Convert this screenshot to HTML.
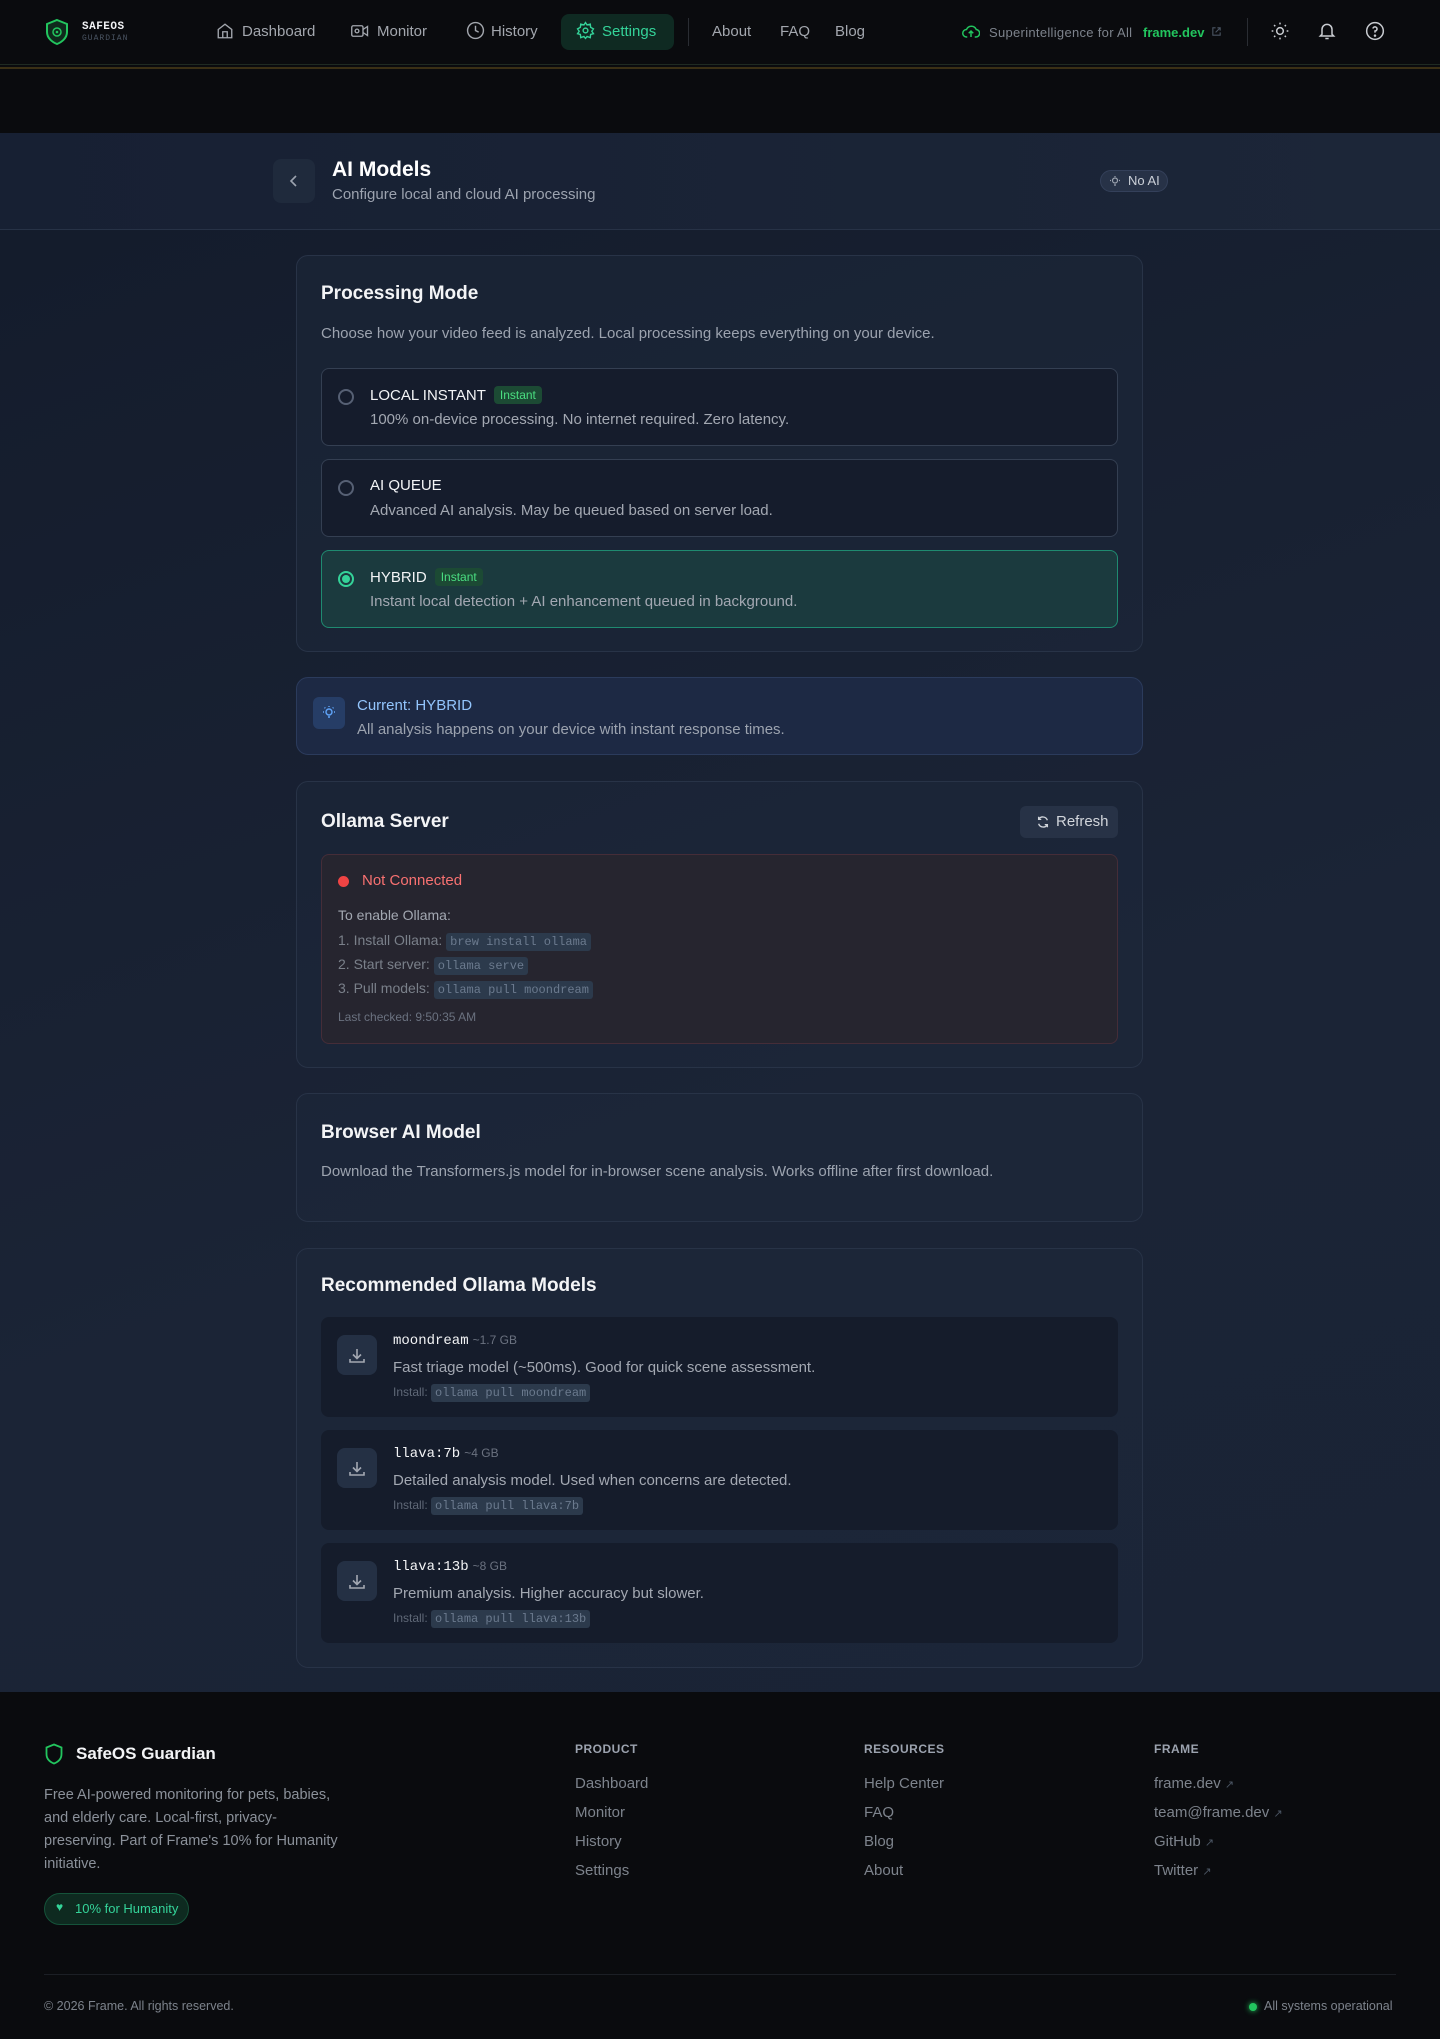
<!DOCTYPE html>
<html><head><meta charset="utf-8"><style>
*{box-sizing:border-box;margin:0;padding:0}
body{width:1440px;height:2039px;background:#0a0b0e;font-family:"Liberation Sans",sans-serif;color:#e5e7eb;position:relative;overflow:hidden}
.a{position:absolute}
.nav{left:0;top:0;width:1440px;height:65px;background:#0a0b0e;border-bottom:1px solid #1f2a22}
.gold{left:0;top:67px;width:1440px;height:2px;background:#3b3015}
.ni{position:absolute;top:22px;font-size:15px;color:#a3a7ae;line-height:20px}
.ic{position:absolute;top:22px}
.hdr{left:0;top:133px;width:1440px;height:97px;background:linear-gradient(90deg,#172033,#1c2638);border-bottom:1px solid #273246}
.main{left:0;top:230px;width:1440px;height:1462px;background:linear-gradient(160deg,#141c2c 0%,#1b2436 60%,#1a2335 100%)}
.card{position:absolute;left:296px;width:847px;background:rgba(30,40,58,.55);border:1px solid #283347;border-radius:12px}
.ct{position:absolute;left:24px;font-size:19px;font-weight:bold;color:#f3f4f6}
.txt{font-size:15px;color:#9ca3af}
.opt{position:absolute;left:24px;width:797px;height:78px;border:1px solid #343f52;border-radius:8px;background:#151c2c}
.radio{position:absolute;left:16px;top:20px;width:16px;height:16px;border:2px solid #566074;border-radius:50%}
.ot{position:absolute;left:48px;top:17px;font-size:15px;color:#f3f4f6;font-weight:500}
.od{position:absolute;left:48px;top:42px;font-size:15px;color:#a3a8b2}
.badge{display:inline-block;background:#1c4a34;color:#4ade80;font-size:12px;padding:2px 6px;border-radius:4px;margin-left:8px;vertical-align:1px;font-weight:normal}
code{font-family:"Liberation Mono",monospace;font-size:12px;background:#2c3a4c;color:#6b7a8e;padding:2px 4px;border-radius:3px}
.mi{position:absolute;left:24px;width:797px;height:100px;background:#151c2b;border-radius:8px}
.mic{position:absolute;left:16px;top:18px;width:40px;height:40px;background:#243044;border-radius:8px}
.mn{position:absolute;left:72px;top:16px;font-family:"Liberation Mono",monospace;font-size:14px;color:#f3f4f6}
.mn span{font-family:"Liberation Sans",sans-serif;font-size:12px;color:#6b7280;margin-left:4px}
.md{position:absolute;left:72px;top:42px;font-size:15px;color:#a3a8b2}
.mx{position:absolute;left:72px;top:68px;font-size:12px;color:#5f6877}
.fh{position:absolute;top:1742px;font-size:12px;color:#9ca3af;letter-spacing:.5px;font-weight:bold}
.fl{position:absolute;font-size:15px;color:#7d838c}
</style></head><body>
<div class="a nav"></div>
<div class="a gold"></div>
<svg class="a" style="left:45px;top:18px" width="24" height="28" viewBox="0 0 24 28"><path d="M12 2 L22 6 V14 C22 20 17 24 12 26 C7 24 2 20 2 14 V6 Z" fill="#0f2a1c" stroke="#22c55e" stroke-width="2"/><circle cx="12" cy="14" r="4" fill="none" stroke="#22c55e" stroke-width="1.5"/><circle cx="12" cy="14" r="1.3" fill="#22c55e"/></svg>
<div class="a" style="left:82px;top:21px;font-size:11px;font-weight:bold;color:#f3f4f6;letter-spacing:.5px;font-family:'Liberation Mono',monospace">SAFEOS</div>
<div class="a" style="left:82px;top:34px;font-size:8px;color:#4b5563;letter-spacing:1px;font-family:'Liberation Mono',monospace">GUARDIAN</div>
<svg class="ic" style="left:216px;top:22px" width="18" height="18" viewBox="0 0 24 24" fill="none" stroke="#a3a7ae" stroke-width="1.8"><path d="M3 10 L12 3 L21 10 V21 H3 Z M9 21 V13 H15 V21"/></svg>
<div class="ni" style="left:242px">Dashboard</div>
<svg class="ic" style="left:350px;top:22px" width="20" height="18" viewBox="0 0 26 24" fill="none" stroke="#a3a7ae" stroke-width="1.8"><rect x="2" y="5" width="15" height="14" rx="2"/><path d="M17 10 L23 6 V18 L17 14"/><circle cx="9" cy="12" r="2.5"/></svg>
<div class="ni" style="left:377px">Monitor</div>
<svg class="ic" style="left:466px;top:21px" width="19" height="19" viewBox="0 0 24 24" fill="none" stroke="#a3a7ae" stroke-width="1.8"><circle cx="12" cy="12" r="10"/><path d="M12 6 V12 L16 14"/></svg>
<div class="ni" style="left:491px">History</div>
<div class="a" style="left:561px;top:14px;width:113px;height:36px;background:#0f2a22;border-radius:8px"></div>
<svg class="ic" style="left:576px;top:21px" width="19" height="19" viewBox="0 0 24 24" fill="none" stroke="#34d399" stroke-width="1.8"><circle cx="12" cy="12" r="3"/><path d="M12 2 L14 5 L18 4 L18.5 8 L22 10 L20 13 L22 16 L18.5 17 L18 21 L14 19.5 L12 22 L10 19.5 L6 21 L5.5 17 L2 16 L4 13 L2 10 L5.5 8 L6 4 L10 5 Z"/></svg>
<div class="ni" style="left:602px;color:#34d399">Settings</div>
<div class="a" style="left:688px;top:18px;width:1px;height:28px;background:#2a2d33"></div>
<div class="ni" style="left:712px">About</div>
<div class="ni" style="left:780px">FAQ</div>
<div class="ni" style="left:835px">Blog</div>
<svg class="ic" style="left:962px;top:23px" width="18" height="16" viewBox="0 0 24 20" fill="none" stroke="#22c55e" stroke-width="2"><path d="M7 18 H6 A5 5 0 0 1 6 8 A7 7 0 0 1 19 8 A5 5 0 0 1 18 18 H17"/><path d="M12 18 V10 M9 13 L12 10 L15 13"/></svg>
<div class="ni" style="left:989px;font-size:13px;top:23px;color:#7d838c;letter-spacing:.3px">Superintelligence for All</div>
<div class="ni" style="left:1143px;font-size:13px;top:23px;color:#22c55e;font-weight:bold">frame.dev</div>
<svg class="ic" style="left:1211px;top:26px" width="11" height="11" viewBox="0 0 12 12" fill="none" stroke="#4b5563" stroke-width="1.2"><path d="M5 2 H2 V10 H10 V7 M7 2 H10 V5 M10 2 L5 7"/></svg>
<div class="a" style="left:1247px;top:18px;width:1px;height:28px;background:#2a2d33"></div>
<svg class="ic" style="left:1270px;top:21px" width="20" height="20" viewBox="0 0 24 24" fill="none" stroke="#c9ccd1" stroke-width="1.8"><circle cx="12" cy="12" r="4"/><path d="M12 2v2M12 20v2M2 12h2M20 12h2M4.9 4.9l1.4 1.4M17.7 17.7l1.4 1.4M4.9 19.1l1.4-1.4M17.7 6.3l1.4-1.4"/></svg>
<svg class="ic" style="left:1317px;top:21px" width="20" height="20" viewBox="0 0 24 24" fill="none" stroke="#c9ccd1" stroke-width="1.8"><path d="M6 16 V10 A6 6 0 0 1 18 10 V16 L20 18 H4 Z M10 21 H14"/></svg>
<svg class="ic" style="left:1365px;top:21px" width="20" height="20" viewBox="0 0 24 24" fill="none" stroke="#c9ccd1" stroke-width="1.8"><circle cx="12" cy="12" r="10"/><path d="M9.5 9 A2.5 2.5 0 1 1 12 12 V14"/><circle cx="12" cy="17.5" r=".6" fill="#c9ccd1"/></svg>

<div class="a hdr"></div>
<div class="a" style="left:273px;top:159px;width:42px;height:44px;background:#1f2a3c;border-radius:8px"></div>
<svg class="a" style="left:287px;top:174px" width="14" height="14" viewBox="0 0 14 14" fill="none" stroke="#9ca3af" stroke-width="1.6"><path d="M9 2 L4 7 L9 12"/></svg>
<div class="a" style="left:332px;top:158px;font-size:21px;font-weight:bold;color:#fff">AI Models</div>
<div class="a txt" style="left:332px;top:186px">Configure local and cloud AI processing</div>
<div class="a" style="left:1100px;top:170px;width:68px;height:22px;border-radius:11px;background:#273247;border:1px solid #34405a;font-size:13px;color:#cbd0d8;line-height:20px;padding-left:27px">No AI</div>
<svg class="a" style="left:1110px;top:176px" width="10" height="11" viewBox="0 0 10 11" fill="none" stroke="#9ca3af" stroke-width="1.2"><circle cx="5" cy="4.5" r="2.5"/><path d="M4 9 H6 M5 0 V1 M1 4.5 H0 M10 4.5 H9"/></svg>

<div class="a main"></div>

<div class="card" style="top:255px;height:397px">
  <div class="ct" style="top:27px">Processing Mode</div>
  <div class="a txt" style="left:24px;top:69px">Choose how your video feed is analyzed. Local processing keeps everything on your device.</div>
  <div class="opt" style="top:112px"><div class="radio"></div><div class="ot">LOCAL INSTANT<span class="badge">Instant</span></div><div class="od">100% on-device processing. No internet required. Zero latency.</div></div>
  <div class="opt" style="top:203px"><div class="radio"></div><div class="ot">AI QUEUE</div><div class="od">Advanced AI analysis. May be queued based on server load.</div></div>
  <div class="opt" style="top:294px;background:#1b3a3e;border-color:#1f8a70"><div class="radio" style="border-color:#34d399"><div style="position:absolute;left:2px;top:2px;width:8px;height:8px;border-radius:50%;background:#34d399"></div></div><div class="ot">HYBRID<span class="badge">Instant</span></div><div class="od">Instant local detection + AI enhancement queued in background.</div></div>
</div>

<div class="card" style="top:677px;height:78px;background:#1d2944;border-color:#2b3b5c">
  <div class="a" style="left:16px;top:19px;width:32px;height:32px;background:#263d66;border-radius:6px"></div>
  <svg class="a" style="left:24px;top:27px" width="16" height="16" viewBox="0 0 16 16" fill="none" stroke="#60a5fa" stroke-width="1.4"><circle cx="8" cy="7" r="3"/><path d="M7 12 H9 M8 1 V2 M2 7 H3 M13 7 H14 M3.5 2.5 L4.3 3.3 M12.5 2.5 L11.7 3.3"/></svg>
  <div class="a" style="left:60px;top:19px;font-size:15px;color:#93c5fd;font-weight:500">Current: HYBRID</div>
  <div class="a txt" style="left:60px;top:43px">All analysis happens on your device with instant response times.</div>
</div>

<div class="card" style="top:781px;height:287px">
  <div class="ct" style="top:29px">Ollama Server</div>
  <div class="a" style="left:723px;top:24px;width:98px;height:32px;background:#273246;border-radius:6px;font-size:15px;color:#d1d5db;line-height:32px;padding-left:36px">Refresh</div>
  <svg class="a" style="left:739px;top:33px" width="14" height="14" viewBox="0 0 16 16" fill="none" stroke="#d1d5db" stroke-width="1.5"><path d="M13 6 A5.5 5.5 0 0 0 3 5 M3 2 V5 H6 M3 10 A5.5 5.5 0 0 0 13 11 M13 14 V11 H10"/></svg>
  <div class="a" style="left:24px;top:72px;width:797px;height:190px;background:#26252f;border:1px solid #452d38;border-radius:8px">
    <div class="a" style="left:16px;top:21px;width:11px;height:11px;border-radius:50%;background:#ef4444"></div>
    <div class="a" style="left:40px;top:17px;font-size:15px;color:#f87171">Not Connected</div>
    <div class="a" style="left:16px;top:52px;font-size:14px;color:#a3a8b2">To enable Ollama:</div>
    <div class="a" style="left:16px;top:77px;font-size:14px;color:#7a808a">1. Install Ollama: <code>brew install ollama</code></div>
    <div class="a" style="left:16px;top:101px;font-size:14px;color:#7a808a">2. Start server: <code>ollama serve</code></div>
    <div class="a" style="left:16px;top:125px;font-size:14px;color:#7a808a">3. Pull models: <code>ollama pull moondream</code></div>
    <div class="a" style="left:16px;top:155px;font-size:12px;color:#6b7280">Last checked: 9:50:35 AM</div>
  </div>
</div>

<div class="card" style="top:1093px;height:129px">
  <div class="ct" style="top:28px">Browser AI Model</div>
  <div class="a txt" style="left:24px;top:69px">Download the Transformers.js model for in-browser scene analysis. Works offline after first download.</div>
</div>

<div class="card" style="top:1248px;height:420px">
  <div class="ct" style="top:26px">Recommended Ollama Models</div>
  <div class="mi" style="top:68px"><div class="mic"></div><div class="mn">moondream<span>~1.7 GB</span></div><div class="md">Fast triage model (~500ms). Good for quick scene assessment.</div><div class="mx">Install: <code>ollama pull moondream</code></div></div>
  <div class="mi" style="top:181px"><div class="mic"></div><div class="mn">llava:7b<span>~4 GB</span></div><div class="md">Detailed analysis model. Used when concerns are detected.</div><div class="mx">Install: <code>ollama pull llava:7b</code></div></div>
  <div class="mi" style="top:294px"><div class="mic"></div><div class="mn">llava:13b<span>~8 GB</span></div><div class="md">Premium analysis. Higher accuracy but slower.</div><div class="mx">Install: <code>ollama pull llava:13b</code></div></div>
</div>
<svg class="a" style="left:347px;top:1346px" width="20" height="20" viewBox="0 0 20 20" fill="none" stroke="#a3a8b2" stroke-width="1.6"><path d="M10 3 V12 M6 8.5 L10 12.5 L14 8.5 M3 13 V16 H17 V13"/></svg>
<svg class="a" style="left:347px;top:1459px" width="20" height="20" viewBox="0 0 20 20" fill="none" stroke="#a3a8b2" stroke-width="1.6"><path d="M10 3 V12 M6 8.5 L10 12.5 L14 8.5 M3 13 V16 H17 V13"/></svg>
<svg class="a" style="left:347px;top:1572px" width="20" height="20" viewBox="0 0 20 20" fill="none" stroke="#a3a8b2" stroke-width="1.6"><path d="M10 3 V12 M6 8.5 L10 12.5 L14 8.5 M3 13 V16 H17 V13"/></svg>

<svg class="a" style="left:45px;top:1743px" width="18" height="22" viewBox="0 0 18 22" fill="none" stroke="#22c55e" stroke-width="1.8"><path d="M9 1.5 L16.5 4.5 V11 C16.5 16 13 19 9 20.5 C5 19 1.5 16 1.5 11 V4.5 Z"/></svg>
<div class="a" style="left:76px;top:1744px;font-size:17px;font-weight:bold;color:#f3f4f6">SafeOS Guardian</div>
<div class="a" style="left:44px;top:1784px;width:340px;font-size:14.5px;line-height:23px;color:#8b919a;white-space:nowrap">Free AI-powered monitoring for pets, babies,<br>and elderly care. Local-first, privacy-<br>preserving. Part of Frame's 10% for Humanity<br>initiative.</div>
<div class="a" style="left:44px;top:1893px;width:145px;height:32px;border-radius:16px;background:#0e2a20;border:1px solid #15533a;font-size:13px;color:#34d399;line-height:30px;padding-left:30px">10% for Humanity</div>
<div class="a" style="left:56px;top:1900px;font-size:12px;color:#34d399">♥</div>
<div class="fh" style="left:575px">PRODUCT</div>
<div class="fh" style="left:864px">RESOURCES</div>
<div class="fh" style="left:1154px">FRAME</div>
<div class="fl" style="left:575px;top:1775px">Dashboard</div>
<div class="fl" style="left:575px;top:1804px">Monitor</div>
<div class="fl" style="left:575px;top:1833px">History</div>
<div class="fl" style="left:575px;top:1862px">Settings</div>
<div class="fl" style="left:864px;top:1775px">Help Center</div>
<div class="fl" style="left:864px;top:1804px">FAQ</div>
<div class="fl" style="left:864px;top:1833px">Blog</div>
<div class="fl" style="left:864px;top:1862px">About</div>
<div class="fl" style="left:1154px;top:1775px">frame.dev <span style="font-size:11px;color:#4b5563">↗</span></div>
<div class="fl" style="left:1154px;top:1804px">team@frame.dev <span style="font-size:11px;color:#4b5563">↗</span></div>
<div class="fl" style="left:1154px;top:1833px">GitHub <span style="font-size:11px;color:#4b5563">↗</span></div>
<div class="fl" style="left:1154px;top:1862px">Twitter <span style="font-size:11px;color:#4b5563">↗</span></div>
<div class="a" style="left:44px;top:1974px;width:1352px;height:1px;background:#1c1f25"></div>
<div class="a" style="left:44px;top:1999px;font-size:12.5px;color:#7d838c">© 2026 Frame. All rights reserved.</div>
<div class="a" style="left:1249px;top:2003px;width:8px;height:8px;border-radius:50%;background:#22c55e;box-shadow:0 0 6px #22c55e"></div>
<div class="a" style="left:1264px;top:1999px;font-size:12.5px;color:#7d838c">All systems operational</div>
</body></html>
